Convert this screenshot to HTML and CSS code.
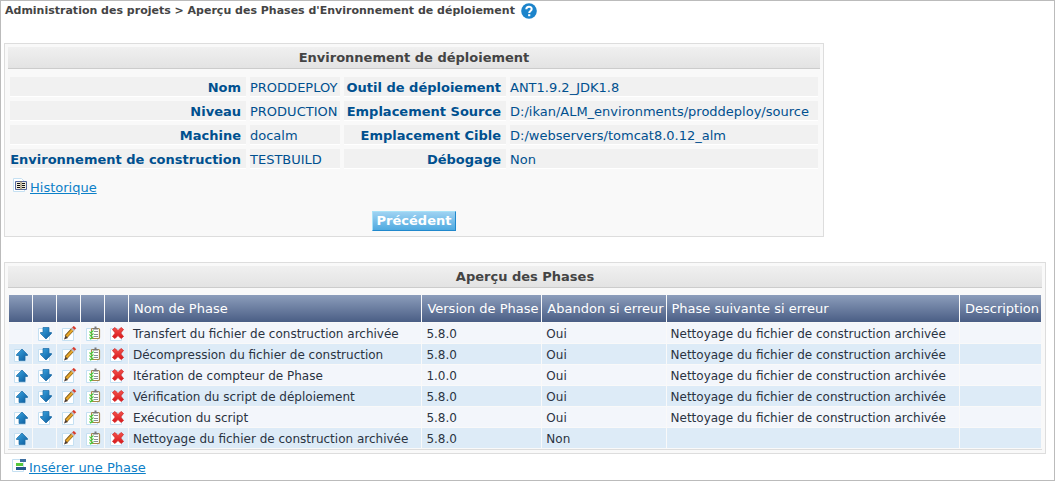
FILE: index.html
```html
<!DOCTYPE html>
<html lang="fr">
<head>
<meta charset="utf-8">
<title>Aperçu des Phases d'Environnement de déploiement</title>
<link rel="stylesheet" href="styles.css">
</head>
<body>
<svg class="sprites" aria-hidden="true">
  <defs>
    <linearGradient id="blue" x1="0" y1="0" x2="1" y2="1">
      <stop offset="0" stop-color="#3ba6e2"/><stop offset="1" stop-color="#0a5a9c"/>
    </linearGradient>
    <linearGradient id="red" x1="0" y1="0" x2="0" y2="1">
      <stop offset="0" stop-color="#f4524c"/><stop offset="1" stop-color="#d8161a"/>
    </linearGradient>
    <symbol id="sheet" viewBox="0 0 16 16">
      <path d="M1.5 2.5h8l3 3v9h-11z" fill="#fff" stroke="#c5e0f2"/>
    </symbol>
    <symbol id="up" viewBox="0 0 16 16">
      <use href="#sheet"/>
      <path d="M9 2 14.500 7.500v1H12v5H6v-5H3.500v-1z" fill="url(#blue)" stroke="#1d6aa5" stroke-width=".7"/>
    </symbol>
    <symbol id="down" viewBox="0 0 16 16">
      <use href="#sheet"/>
      <path d="M6 1.500h6v5h2.500v1L9 13 3.500 7.500v-1H6z" fill="url(#blue)" stroke="#1d6aa5" stroke-width=".7"/>
    </symbol>
    <symbol id="edit" viewBox="0 0 16 16">
      <use href="#sheet"/>
      <path d="M3 13.500 4.500 9.500 7 12z" fill="#4b3c34"/>
      <path d="M5 10.500 12 3" stroke="#7a5414" stroke-width="3.600"/>
      <path d="M5.500 10.200 12 3.200" stroke="#e9a92c" stroke-width="2.200"/>
      <path d="M11.200 4 12.600 2.500" stroke="#bcbcc4" stroke-width="3.400"/>
      <path d="M12.400 2.700 14 1" stroke="#d93a2c" stroke-width="3.400"/>
    </symbol>
    <symbol id="check" viewBox="0 0 16 16">
      <use href="#sheet"/>
      <rect x="6.500" y="2.500" width="8" height="10" rx="1" fill="#fff" stroke="#a58748" stroke-width="1.200"/>
      <path d="M8 3.500V2h1.500V.500h2V2H13v1.500z" fill="#787878"/>
      <path d="M9 5.500h4M9 8.500h4M9 10.500h4" stroke="#8a9098"/>
      <path d="m4.500 5.500 1.200 1.500L8.500 4.500M4.500 8.500 5.700 10l2.800-2.500M4.500 11.500 5.700 13l2.800-2.500" fill="none" stroke="#3ed13e" stroke-width="1.100"/>
    </symbol>
    <symbol id="delete" viewBox="0 0 16 16">
      <use href="#sheet"/>
      <path d="m3.500 3.500 2.500-2L9 4.500l3-3 2.500 2L11.700 7l2.800 3.500-2.500 2-3-3-3 3-2.500-2L6.300 7z" fill="url(#red)" stroke="#d02424" stroke-width=".8"/>
    </symbol>
    <symbol id="history" viewBox="0 0 16 16">
      <path d="M.500 .500h8l3 3v10H.500z" fill="#fff" stroke="#c5e0f2"/>
      <path d="M2.500 3.500h11v8h-11z" fill="#f2eddd" stroke="#53679e"/>
      <path d="M8 3v9" stroke="#8a7a58"/>
      <path d="M4 5.500h3M4 7.500h3M4 9.500h3M9 5.500h3M9 7.500h3M9 9.500h3" stroke="#111"/>
    </symbol>
    <symbol id="insert" viewBox="0 0 16 16">
      <path d="M.500 1.500h8l3 3v9H.500z" fill="#fff" stroke="#c5e0f2"/>
      <path d="M8 1h6v3H8z" fill="#3c6ea0"/>
      <path d="M4 5h7v3H4z" fill="#56c83c"/>
      <path d="M4 9h10v3H4z" fill="#24588c"/>
    </symbol>
  </defs>
</svg>
<main class="frame">
  <h1 class="breadcrumb">Administration des projets &gt; Aperçu des Phases d'Environnement de déploiement
    <a class="help" href="#aide" aria-label="Aide"><svg width="16" height="16" viewBox="0 0 16 16"><circle cx="8" cy="8" r="7.800" fill="#1c84cb"/><path d="M5.300 6.200C5.300 2.800 10.700 2.900 10.700 6c0 2-2.500 1.900-2.500 4" fill="none" stroke="#fff" stroke-width="2"/><path d="M7.100 11.200h2.200v2H7.100z" fill="#fff"/></svg></a>
  </h1>

  <section class="panel panel-details">
    <h2 class="panel-title">Environnement de déploiement</h2>
    <table class="details">
      <colgroup><col class="c-label"><col class="c-value"><col class="c-label2"><col class="c-value2"></colgroup>
      <tr><th scope="row">Nom</th><td>PRODDEPLOY</td><th scope="row">Outil de déploiement</th><td>ANT1.9.2_JDK1.8</td></tr>
      <tr><th scope="row">Niveau</th><td>PRODUCTION</td><th scope="row">Emplacement Source</th><td>D:/ikan/ALM_environments/proddeploy/source</td></tr>
      <tr><th scope="row">Machine</th><td>docalm</td><th scope="row">Emplacement Cible</th><td>D:/webservers/tomcat8.0.12_alm</td></tr>
      <tr><th scope="row">Environnement de construction</th><td>TESTBUILD</td><th scope="row">Débogage</th><td>Non</td></tr>
    </table>
    <div class="links"><svg class="icon"><use href="#history"/></svg><a href="#historique">Historique</a></div>
    <div class="actions"><button class="button" type="button">Précédent</button></div>
  </section>

  <section class="panel panel-phases">
    <h2 class="panel-title">Aperçu des Phases</h2>
    <table class="phases">
      <colgroup><col class="c-icon" span="5"><col class="c-wide"><col class="c-version"><col class="c-abort"><col class="c-wide"><col></colgroup>
      <thead>
        <tr><th></th><th></th><th></th><th></th><th></th><th scope="col">Nom de Phase</th><th scope="col">Version de Phase</th><th scope="col">Abandon si erreur</th><th scope="col">Phase suivante si erreur</th><th scope="col">Description</th></tr>
      </thead>
      <tbody>
        <tr><td></td><td><a href="#d" aria-label="Descendre"><svg class="icon"><use href="#down"/></svg></a></td><td><a href="#e" aria-label="Modifier"><svg class="icon"><use href="#edit"/></svg></a></td><td><a href="#p" aria-label="Paramètres"><svg class="icon"><use href="#check"/></svg></a></td><td><a href="#x" aria-label="Supprimer"><svg class="icon"><use href="#delete"/></svg></a></td><td>Transfert du fichier de construction archivée</td><td>5.8.0</td><td>Oui</td><td>Nettoyage du fichier de construction archivée</td><td></td></tr>
        <tr><td><a href="#u" aria-label="Monter"><svg class="icon"><use href="#up"/></svg></a></td><td><a href="#d" aria-label="Descendre"><svg class="icon"><use href="#down"/></svg></a></td><td><a href="#e" aria-label="Modifier"><svg class="icon"><use href="#edit"/></svg></a></td><td><a href="#p" aria-label="Paramètres"><svg class="icon"><use href="#check"/></svg></a></td><td><a href="#x" aria-label="Supprimer"><svg class="icon"><use href="#delete"/></svg></a></td><td>Décompression du fichier de construction</td><td>5.8.0</td><td>Oui</td><td>Nettoyage du fichier de construction archivée</td><td></td></tr>
        <tr><td><a href="#u" aria-label="Monter"><svg class="icon"><use href="#up"/></svg></a></td><td><a href="#d" aria-label="Descendre"><svg class="icon"><use href="#down"/></svg></a></td><td><a href="#e" aria-label="Modifier"><svg class="icon"><use href="#edit"/></svg></a></td><td><a href="#p" aria-label="Paramètres"><svg class="icon"><use href="#check"/></svg></a></td><td><a href="#x" aria-label="Supprimer"><svg class="icon"><use href="#delete"/></svg></a></td><td>Itération de compteur de Phase</td><td>1.0.0</td><td>Oui</td><td>Nettoyage du fichier de construction archivée</td><td></td></tr>
        <tr><td><a href="#u" aria-label="Monter"><svg class="icon"><use href="#up"/></svg></a></td><td><a href="#d" aria-label="Descendre"><svg class="icon"><use href="#down"/></svg></a></td><td><a href="#e" aria-label="Modifier"><svg class="icon"><use href="#edit"/></svg></a></td><td><a href="#p" aria-label="Paramètres"><svg class="icon"><use href="#check"/></svg></a></td><td><a href="#x" aria-label="Supprimer"><svg class="icon"><use href="#delete"/></svg></a></td><td>Vérification du script de déploiement</td><td>5.8.0</td><td>Oui</td><td>Nettoyage du fichier de construction archivée</td><td></td></tr>
        <tr><td><a href="#u" aria-label="Monter"><svg class="icon"><use href="#up"/></svg></a></td><td><a href="#d" aria-label="Descendre"><svg class="icon"><use href="#down"/></svg></a></td><td><a href="#e" aria-label="Modifier"><svg class="icon"><use href="#edit"/></svg></a></td><td><a href="#p" aria-label="Paramètres"><svg class="icon"><use href="#check"/></svg></a></td><td><a href="#x" aria-label="Supprimer"><svg class="icon"><use href="#delete"/></svg></a></td><td>Exécution du script</td><td>5.8.0</td><td>Oui</td><td>Nettoyage du fichier de construction archivée</td><td></td></tr>
        <tr><td><a href="#u" aria-label="Monter"><svg class="icon"><use href="#up"/></svg></a></td><td></td><td><a href="#e" aria-label="Modifier"><svg class="icon"><use href="#edit"/></svg></a></td><td><a href="#p" aria-label="Paramètres"><svg class="icon"><use href="#check"/></svg></a></td><td><a href="#x" aria-label="Supprimer"><svg class="icon"><use href="#delete"/></svg></a></td><td>Nettoyage du fichier de construction archivée</td><td>5.8.0</td><td>Non</td><td></td><td></td></tr>
      </tbody>
    </table>
  </section>
  <div class="links insert"><svg class="icon"><use href="#insert"/></svg><a href="#inserer">Insérer une Phase</a></div>
</main>
</body>
</html>
```
FILE: styles.css
```css
* { box-sizing: border-box; }

body {
  margin: 0;
  background: #fff;
  font: 13px/16px Verdana, "DejaVu Sans", sans-serif;
  color: #2a3342;
}

.sprites { position: absolute; width: 0; height: 0; }

.frame {
  min-height: 100vh;
  border: 1px solid #bbb;
  padding: 2px 8px 4px 3px;
}

.breadcrumb {
  display: flex;
  align-items: center;
  gap: 6px;
  margin: 0 0 24px;
  padding-left: 1px;
  font-size: 11px;
  line-height: 16px;
  color: #444;
}

.help { display: flex; }
.icon { display: block; width: 16px; height: 16px; }

.panel {
  border: 1px solid #ddd;
  background: #f9f9f9;
  padding: 3px;
}

.panel-details { width: fit-content; margin-bottom: 25px; padding-bottom: 5px; }

.panel-title {
  margin: 0;
  padding: 3px 0 2px;
  border-bottom: 1px solid #ccc;
  background: linear-gradient(#f0f0f0, #e3e3e3);
  font-size: 13px;
  line-height: 16px;
  text-align: center;
  color: #444;
}

.details {
  margin: 4px -2px 0;
  border-spacing: 4px;
  color: #00508f;
  white-space: nowrap;
}

.details th, .details td {
  height: 20px;
  padding: 3px 0 0;
  border-bottom: 1px solid #fff;
  background: #f1f1f1;
  text-align: left;
}

.details th { padding-right: 5px; text-align: right; }
.c-label { width: 236px; }
.c-value { width: 90px; }
.c-label2 { width: 162px; }
.c-value2 { width: 308px; }

.links { display: flex; padding: 5px 5px 0; }
.links a { padding-top: 2px; color: #0c80c8; }
.links .icon { margin-right: 1px; }

.actions { padding-top: 15px; text-align: center; }

.button {
  display: inline-block;
  height: 20px;
  padding: 0 4px;
  border: 1px solid;
  border-color: #a8e2f8 #2088cc #2088cc #a8e2f8;
  background: linear-gradient(#9ed2f2, #4faae0);
  font: bold 13px/16px Verdana, "DejaVu Sans", sans-serif;
  color: #fff;
  vertical-align: top;
}

.panel-phases { padding-bottom: 3px; }

.phases {
  width: 100%;
  margin-top: 6px;
  border-spacing: 1px;
  border-bottom: 1px solid #ddd;
  white-space: nowrap;
}

.phases th, .phases td { text-align: left; }
.phases th {
  height: 27px;
  padding: 0 2px 0 5px;
  background: linear-gradient(#8c9dbb, #4a5e85);
  font-weight: normal;
  color: #fff;
}
.phases td {
  height: 20px;
  padding: 2px 4px 0;
  font-size: 12px;
}
.phases tbody tr:nth-child(odd) td { background: #f3f6fb; }
.phases tbody tr:nth-child(even) td { background: #ddebf7; }
.phases th:nth-child(-n+5), .phases td:nth-child(-n+5) { padding: 2px 3px 0 4px; }
.c-icon { width: 23px; }
.c-wide { width: 293px; }
.c-version { width: 119px; }
.c-abort { width: 123px; }

.insert { padding: 4px 8px 0; }
```
